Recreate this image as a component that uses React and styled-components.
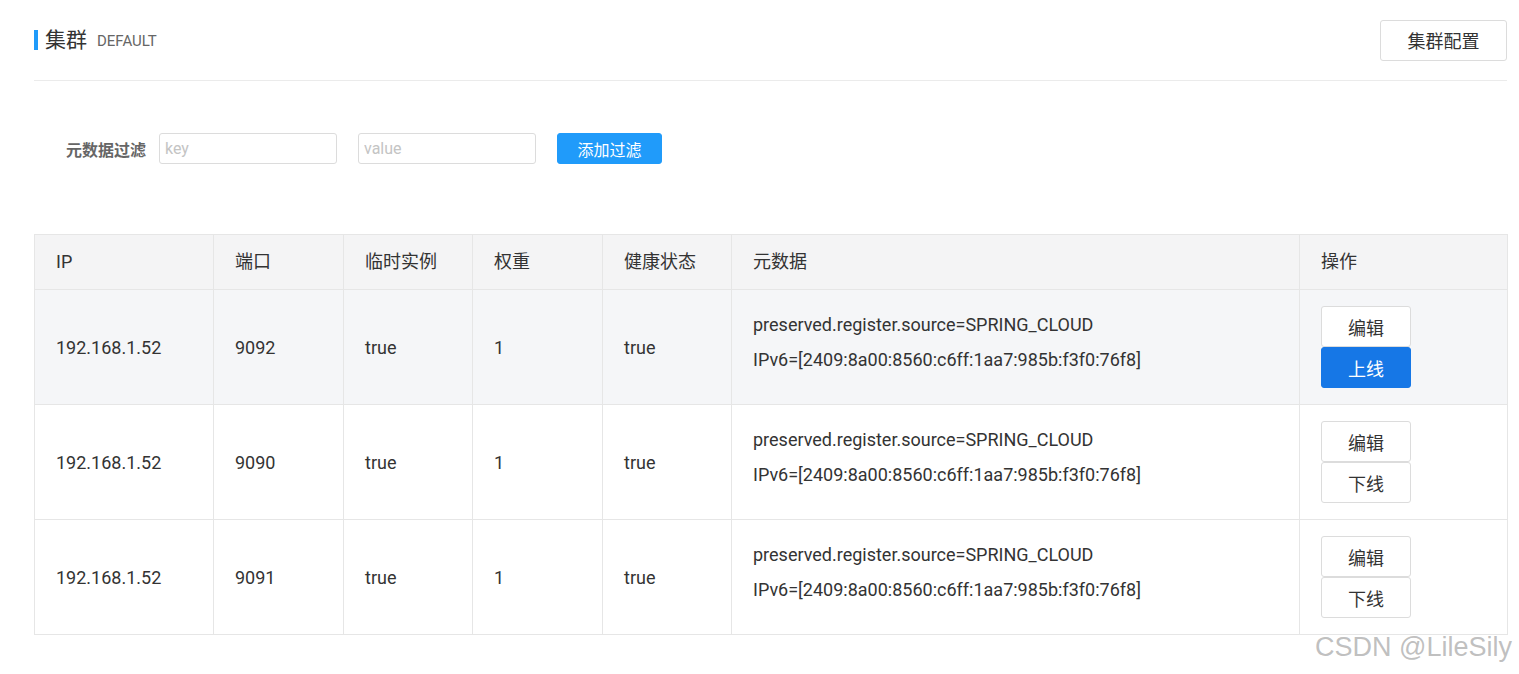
import React from 'react'
import styled, { createGlobalStyle } from 'styled-components'

const GlobalStyle = createGlobalStyle`
  body {
    margin: 0;
    background: #ffffff;
    font-family: Roboto, "Noto Sans CJK SC", sans-serif;
    color: #333333;
  }
`

const Page = styled.div`
  padding: 20px 12px 0 34px;
  position: relative;
  min-height: 674px;
  box-sizing: border-box;
`

const Header = styled.div`
  display: flex;
  align-items: center;
  justify-content: space-between;
  height: 40px;
  padding-bottom: 20px;
  border-bottom: 1px solid #ebebeb;
`

const Title = styled.div`
  display: flex;
  align-items: center;
  gap: 10px;
  border-left: 4px solid #209bfa;
  padding-left: 7px;
  height: 20px;
`

const TitleText = styled.span`
  font-size: 21px;
  color: #333;
  line-height: 20px;
`

const SubTitle = styled.span`
  font-size: 15px;
  color: #666;
  line-height: 20px;
  padding-top: 2px;
`

const Button = styled.button`
  font-family: Roboto, "Noto Sans CJK SC", sans-serif;
  font-size: ${p => p.$size || 18}px;
  width: ${p => p.$width}px;
  height: ${p => p.$height}px;
  border-radius: 3px;
  cursor: pointer;
  padding: 0;
  border: 1px solid ${p => (p.$primary ? p.$primary : '#dcdcdc')};
  background: ${p => (p.$primary ? p.$primary : '#ffffff')};
  color: ${p => (p.$primary ? '#ffffff' : '#333333')};
`

const FilterRow = styled.div`
  display: flex;
  align-items: center;
  margin-top: 52px;
  padding-left: 32px;
  height: 31px;
`

const FilterLabel = styled.span`
  font-size: 16px;
  font-weight: 700;
  color: #666;
  margin-right: 13px;
`

const Input = styled.input`
  width: 178px;
  height: 31px;
  box-sizing: border-box;
  border: 1px solid #dcdcdc;
  border-radius: 3px;
  padding: 0 5px;
  font-family: Roboto, "Noto Sans CJK SC", sans-serif;
  font-size: 16px;
  margin-right: 21px;
  outline: none;
  &::placeholder {
    color: #c4c4c4;
  }
`

const Table = styled.table`
  margin-top: 70px;
  width: 1474px;
  border-collapse: collapse;
  table-layout: fixed;
  font-size: 18px;
`

const Th = styled.th`
  height: 54px;
  line-height: 20px;
  background: #f4f4f5;
  border: 1px solid #e6e6e6;
  text-align: left;
  font-weight: 400;
  padding: 0 0 0 21px;
  color: #333;
`

const Tr = styled.tr`
  background: ${p => (p.$hover ? '#f5f6f8' : '#ffffff')};
`

const Td = styled.td`
  height: 114px;
  border: 1px solid #e6e6e6;
  padding: 0 0 0 21px;
  color: #333;
  vertical-align: middle;
`

const MetaBlock = styled.div`
  margin-bottom: 10px;
`

const Meta = styled.div`
  line-height: 35px;
`

const Ops = styled.div`
  display: flex;
  flex-direction: column;
`

const Watermark = styled.div`
  position: absolute;
  left: 1315px;
  top: 632px;
  font-family: "Liberation Sans", Arial, sans-serif;
  font-size: 27px;
  color: rgba(175, 175, 175, 0.8);
  text-shadow: 0 0 1px rgba(255, 255, 255, 0.8);
  white-space: nowrap;
`

const cols = [179, 130, 129, 130, 129, 568, 208]
const heads = ['IP', '端口', '临时实例', '权重', '健康状态', '元数据', '操作']
const rows = [
  { port: '9092', online: false },
  { port: '9090', online: true },
  { port: '9091', online: true },
]

export default function App() {
  return (
    <>
      <GlobalStyle />
      <Page>
        <Header>
          <Title>
            <TitleText>集群</TitleText>
            <SubTitle>DEFAULT</SubTitle>
          </Title>
          <Button $width={127} $height={41}>集群配置</Button>
        </Header>
        <FilterRow>
          <FilterLabel>元数据过滤</FilterLabel>
          <Input placeholder="key" />
          <Input placeholder="value" />
          <Button $width={105} $height={31} $size={16} $primary="#209bfa">添加过滤</Button>
        </FilterRow>
        <Table>
          <colgroup>
            {cols.map((w, i) => <col key={i} style={{ width: w }} />)}
          </colgroup>
          <thead>
            <tr>
              {heads.map(h => <Th key={h}>{h}</Th>)}
            </tr>
          </thead>
          <tbody>
            {rows.map((r, i) => (
              <Tr key={r.port} $hover={i === 0}>
                <Td>192.168.1.52</Td>
                <Td>{r.port}</Td>
                <Td>true</Td>
                <Td>1</Td>
                <Td>true</Td>
                <Td>
                  <MetaBlock>
                    <Meta>preserved.register.source=SPRING_CLOUD</Meta>
                    <Meta>IPv6=[2409:8a00:8560:c6ff:1aa7:985b:f3f0:76f8]</Meta>
                  </MetaBlock>
                </Td>
                <Td>
                  <Ops>
                    <Button $width={90} $height={41}>编辑</Button>
                    {r.online
                      ? <Button $width={90} $height={41}>下线</Button>
                      : <Button $width={90} $height={41} $primary="#1677e6">上线</Button>}
                  </Ops>
                </Td>
              </Tr>
            ))}
          </tbody>
        </Table>
        <Watermark>CSDN @LileSily</Watermark>
      </Page>
    </>
  )
}
